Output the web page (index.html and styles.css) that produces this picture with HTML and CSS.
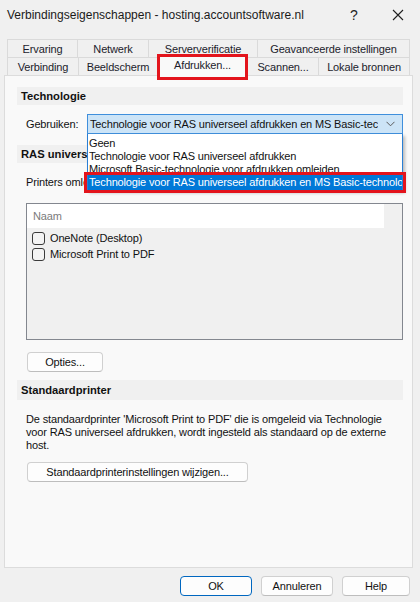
FILE: index.html
```html
<!DOCTYPE html>
<html lang="nl">
<head>
<meta charset="utf-8">
<title>Verbindingseigenschappen</title>
<link rel="stylesheet" href="styles.css">
</head>
<body>
<div class="dialog">
  <div class="titlebar">
    <span class="title">Verbindingseigenschappen - hosting.accountsoftware.nl</span>
    <span class="tb-btn tb-help">?</span>
    <span class="tb-btn tb-close">
      <svg width="12" height="12" viewBox="0 0 12 12"><path d="M1 1 L11 11 M11 1 L1 11" stroke="#1f1f1f" stroke-width="1.1" fill="none"/></svg>
    </span>
  </div>

  <div class="tabs">
    <div class="tab-row">
      <div class="tab w-ervaring">Ervaring</div>
      <div class="tab w-netwerk">Netwerk</div>
      <div class="tab w-server">Serververificatie</div>
      <div class="tab w-geav last">Geavanceerde instellingen</div>
    </div>
    <div class="tab-row">
      <div class="tab w-verb">Verbinding</div>
      <div class="tab w-beeld">Beeldscherm</div>
      <div class="tab tab-selected w-afdr">Afdrukken...</div>
      <div class="tab w-scan">Scannen...</div>
      <div class="tab w-lokaal last">Lokale bronnen</div>
    </div>
  </div>

  <div class="panel">
    <div class="band">Technologie</div>
    <div class="combo-row">
      <span class="combo-label">Gebruiken:</span>
      <div class="combo-wrap">
        <div class="combo">
          <span class="combo-text">Technologie voor RAS universeel afdrukken en MS Basic-technologie</span>
          <svg class="chevron" width="9" height="6" viewBox="0 0 9 6"><path d="M0.5 0.8 L4.5 4.8 L8.5 0.8" stroke="#5a5a5a" stroke-width="1" fill="none"/></svg>
        </div>
        <div class="dropdown">
          <div class="dd-item"><span class="dd-text">Geen</span></div>
          <div class="dd-item"><span class="dd-text">Technologie voor RAS universeel afdrukken</span></div>
          <div class="dd-item"><span class="dd-text">Microsoft Basic-technologie voor afdrukken omleiden</span></div>
          <div class="dd-item dd-selected"><span class="dd-text">Technologie voor RAS universeel afdrukken en MS Basic-technologie</span></div>
        </div>
      </div>
    </div>

    <div class="band band-2">RAS universeel afdrukken</div>
    <div class="plain-line">Printers omleiden:</div>

    <div class="listbox">
      <div class="lb-header">Naam</div>
      <div class="lb-row"><span class="checkbox"></span><span>OneNote (Desktop)</span></div>
      <div class="lb-row"><span class="checkbox"></span><span>Microsoft Print to PDF</span></div>
    </div>

    <button class="btn btn-opties">Opties...</button>

    <div class="band band-3">Standaardprinter</div>
    <p class="para">De standaardprinter 'Microsoft Print to PDF' die is omgeleid via Technologie<br>voor RAS universeel afdrukken, wordt ingesteld als standaard op de externe<br>host.</p>

    <button class="btn btn-wijzig">Standaardprinterinstellingen wijzigen...</button>
  </div>

  <div class="footer">
    <button class="btn btn-ok">OK</button>
    <button class="btn btn-foot">Annuleren</button>
    <button class="btn btn-help">Help</button>
  </div>
</div>
</body>
</html>
```

FILE: styles.css
```css
* { box-sizing: border-box; }

html, body {
  margin: 0;
  padding: 0;
}

body {
  width: 420px;
  height: 602px;
  overflow: hidden;
  background: #f0f0f0;
  font-family: "Liberation Sans", Arial, sans-serif;
  font-size: 11px;
  letter-spacing: -0.15px;
  color: #111;
}

.dialog {
  display: flex;
  flex-direction: column;
  height: 602px;
  width: 420px;
}

/* Title bar */
.titlebar {
  height: 30px;
  display: flex;
  align-items: center;
  padding-left: 7px;
  background: #f0f0f0;
  font-size: 12px;
  letter-spacing: 0;
}
.title {
  flex: 1;
  min-width: 0;
  color: #1a1a1a;
  white-space: nowrap;
}
.tb-btn {
  width: 44px;
  height: 30px;
  display: flex;
  align-items: center;
  justify-content: center;
  color: #1f1f1f;
}
.tb-help {
  font-size: 14px;
}

/* Tabs */
.tabs {
  margin: 9px 0 0 7px;
  width: 403px;
  position: relative;
  z-index: 2;
}
.tab-row {
  display: flex;
  height: 18px;
}
.tab {
  flex: none;
  height: 18px;
  border-top: 1px solid #dadada;
  border-left: 1px solid #dadada;
  display: flex;
  align-items: center;
  justify-content: center;
  color: #1c1c2c;
  white-space: nowrap;
  background: #f0f0f0;
}
.tab.last {
  border-right: 1px solid #dadada;
}
.w-ervaring { width: 70px; }
.w-netwerk { width: 71px; }
.w-server { width: 109px; }
.w-geav { width: 153px; }
.w-verb { width: 71px; }
.w-beeld { width: 79px; }
.w-afdr { width: 91px; }
.w-scan { width: 70px; }
.w-lokaal { width: 92px; }

.tab-selected {
  position: relative;
  height: 21px;
  margin-top: -2px;
  background: #f9f9f9;
  border-right: 1px solid #dadada;
  padding-bottom: 3px;
}
.tab-selected + .tab {
  border-left: none;
}
.tab-selected::after {
  content: "";
  position: absolute;
  left: -1px;
  right: -1px;
  top: -2px;
  bottom: -4px;
  border: 3px solid #e3141c;
}

/* Panel */
.panel {
  margin-left: 4px;
  width: 409px;
  height: 493px;
  border: 1px solid #dcdcdc;
  background: #f9f9f9;
  padding: 11px 9px 0 12px;
  display: flex;
  flex-direction: column;
  align-items: flex-start;
  position: relative;
  z-index: 1;
}

.band {
  align-self: stretch;
  height: 18px;
  line-height: 18px;
  padding-left: 4px;
  background: #f0f0f0;
  font-weight: bold;
  font-size: 11.2px;
  letter-spacing: 0;
  color: #111;
  white-space: nowrap;
  overflow: hidden;
}
.band-2 {
  margin-top: 11px;
}
.band-3 {
  margin-top: 8px;
  height: 20px;
  line-height: 20px;
}

.combo-row {
  align-self: stretch;
  margin-top: 9px;
  height: 20px;
  display: flex;
  align-items: center;
  position: relative;
  z-index: 5;
}
.combo-label {
  flex: none;
  width: 70px;
  padding-left: 9px;
  color: #111;
}
.combo-wrap {
  flex: 1;
  min-width: 0;
  position: relative;
  height: 20px;
}
.combo {
  height: 20px;
  border: 1px solid #3f8fdc;
  background: #cce4f7;
  display: flex;
  align-items: center;
  padding-left: 2px;
  padding-right: 7px;
}
.combo-text {
  flex: 1;
  min-width: 0;
  overflow: hidden;
  white-space: nowrap;
  color: #111;
}
.chevron {
  margin-left: 8px;
  flex: none;
}

.dropdown {
  position: absolute;
  left: 0;
  right: 0;
  top: 20px;
  background: #fff;
  border: 1px solid #2a7fd4;
  border-top: none;
  padding-top: 3px;
  box-shadow: 2px 2px 3px rgba(0, 0, 0, 0.25);
}
.dd-item {
  height: 13px;
  line-height: 13px;
  padding-left: 1px;
  color: #111;
}
.dd-text {
  display: block;
  overflow: hidden;
  white-space: nowrap;
}
.dd-selected {
  position: relative;
  margin-top: -1px;
  height: 15px;
  line-height: 15px;
  background: #0078d7;
  color: #fff;
}
.dd-selected::after {
  content: "";
  position: absolute;
  left: -4px;
  right: -4px;
  top: -3px;
  bottom: -3px;
  border: 3px solid #e3141c;
}

.plain-line {
  margin-top: 12px;
  padding-left: 9px;
  height: 14px;
  line-height: 14px;
  white-space: nowrap;
  color: #111;
}

.listbox {
  margin-top: 14px;
  margin-left: 9px;
  align-self: stretch;
  height: 137px;
  border: 1px solid #83878f;
  background: #f0f0f0;
}
.lb-header {
  width: 357px;
  height: 24px;
  line-height: 24px;
  background: #fff;
  padding-left: 6px;
  color: #7b7b7b;
  margin-bottom: 2px;
}
.lb-row {
  height: 16px;
  display: flex;
  align-items: center;
  padding-left: 5px;
  gap: 5px;
  color: #111;
}
.checkbox {
  flex: none;
  width: 13px;
  height: 13px;
  border: 1px solid #3a3a3a;
  border-radius: 3px;
  background: #f3f3f3;
}

.btn {
  font-family: inherit;
  font-size: 11px;
  letter-spacing: -0.15px;
  color: #111;
  height: 20px;
  padding: 0;
  background: #fdfdfd;
  border: 1px solid #d0d0d0;
  border-bottom-color: #bdbdbd;
  border-radius: 4px;
}
.btn-opties {
  margin-top: 12px;
  margin-left: 10px;
  width: 76px;
}
.para {
  margin: 13px 0 0 9px;
  line-height: 13px;
  color: #111;
}
.btn-wijzig {
  margin-top: 10px;
  margin-left: 10px;
  width: 221px;
}

.footer {
  margin-top: 8px;
  display: flex;
  justify-content: flex-end;
  gap: 9px;
  padding-right: 10px;
}
.btn-ok {
  width: 72px;
  border: 1px solid #0067c0;
}
.btn-foot {
  width: 72px;
}
.btn-help {
  width: 68px;
}
```
